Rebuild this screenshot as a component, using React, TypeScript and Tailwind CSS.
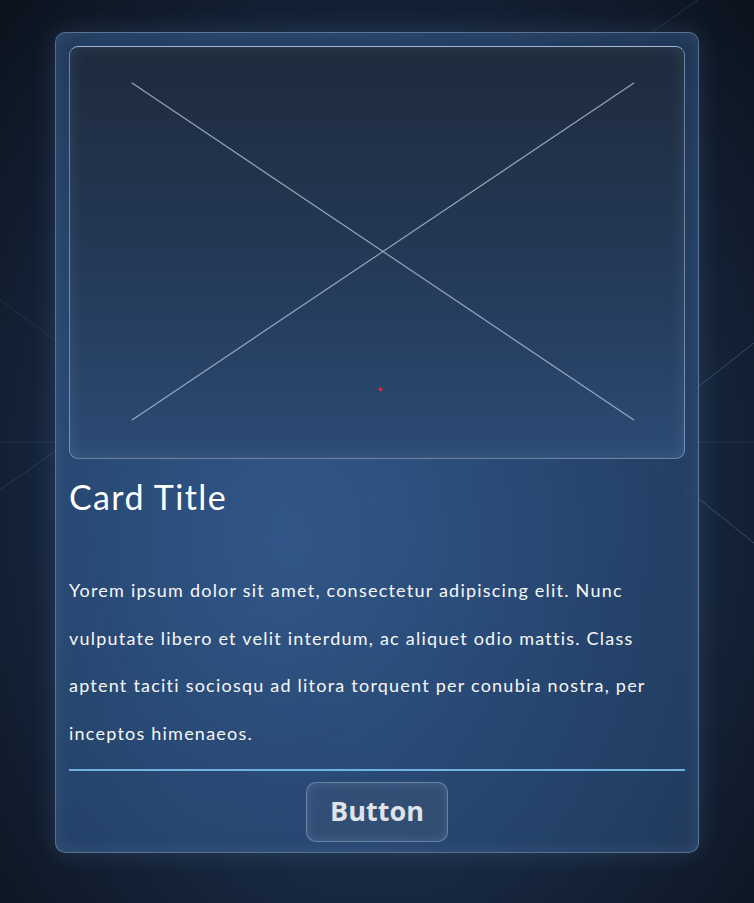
import React from "react"

const futura = { fontFamily: "Lato, 'Open Sans', sans-serif" }

function BackgroundLines() {
  // faint construction lines behind the card
  return (
    <svg className="absolute inset-0 h-full w-full" viewBox="0 0 754 903" preserveAspectRatio="none">
      <g stroke="#9fb6d6" strokeWidth="1" fill="none">
        <line x1="698" y1="0" x2="0" y2="490" strokeOpacity="0.16" />
        <line x1="0" y1="300" x2="200" y2="446" strokeOpacity="0.1" />
        <line x1="0" y1="442" x2="754" y2="442" strokeOpacity="0.12" />
        <line x1="628" y1="442" x2="754" y2="343" strokeOpacity="0.28" />
        <line x1="628" y1="442" x2="754" y2="543" strokeOpacity="0.28" />
      </g>
    </svg>
  )
}

export default function App() {
  return (
    <div
      className="relative h-[903px] w-[754px] overflow-hidden bg-[radial-gradient(ellipse_at_50%_55%,#28466f_0%,#1a2d48_45%,#0b121d_100%)]"
      style={futura}
    >
      <BackgroundLines />

      <div className="relative ml-[55px] pt-[32px]">
        <div className="flex w-[644px] flex-col rounded-[10px] border border-[#8ea6c6]/50 bg-[radial-gradient(ellipse_at_35%_62%,rgba(50,88,138,0.92)_0%,rgba(40,72,115,0.85)_55%,rgba(34,60,96,0.8)_100%)] px-[13px] pt-[13px] pb-[10px] shadow-[0_0_24px_rgba(120,160,210,0.18),inset_0_0_18px_rgba(160,190,230,0.14)]">
          {/* image placeholder */}
          <div className="relative h-[413px] w-full shrink-0 rounded-[9px] border border-[#a9bfdc]/60 border-t-[#c4d4ea]/80 bg-[linear-gradient(180deg,#1e2a3c_0%,#243a58_55%,#2c4b75_100%)] shadow-[inset_0_0_16px_rgba(170,200,235,0.15)]">
            <svg className="absolute inset-0 h-full w-full" viewBox="0 0 615 413">
              <g stroke="#a8b9cf" strokeWidth="1.2" strokeOpacity="0.85">
                <line x1="61" y1="36" x2="566" y2="375" />
                <line x1="566" y1="36" x2="61" y2="375" />
              </g>
              <circle cx="311" cy="344" r="1.8" fill="#ff2020" />
            </svg>
          </div>

          <h1 className="mt-[17px] text-[34px] leading-[42px] tracking-[0.04em] text-white" style={futura}>
            Card Title
          </h1>

          <p className="mt-[49px] h-[190px] text-[18px] leading-[47.5px] tracking-[0.068em] text-[#f6f7f9]" style={futura}>
            Yorem ipsum dolor sit amet, consectetur adipiscing elit. Nunc vulputate libero et velit
            interdum, ac aliquet odio mattis. Class aptent taciti sociosqu ad litora torquent per
            conubia nostra, per inceptos himenaeos.
          </p>

          <div className="mt-[12px] h-[1.5px] w-full shrink-0 bg-[#6fb3e0]" />

          <div className="flex justify-center pt-[11px]">
            <button
              className="h-[60px] w-[142px] rounded-[10px] border border-[#8fa6c6]/60 bg-[#3a5478]/60 text-[27px] font-bold text-[#dfe3ea] shadow-[inset_0_0_10px_rgba(170,200,235,0.18)]"
              style={{ fontFamily: "'Open Sans', sans-serif" }}
            >
              Button
            </button>
          </div>
        </div>
      </div>
    </div>
  )
}
